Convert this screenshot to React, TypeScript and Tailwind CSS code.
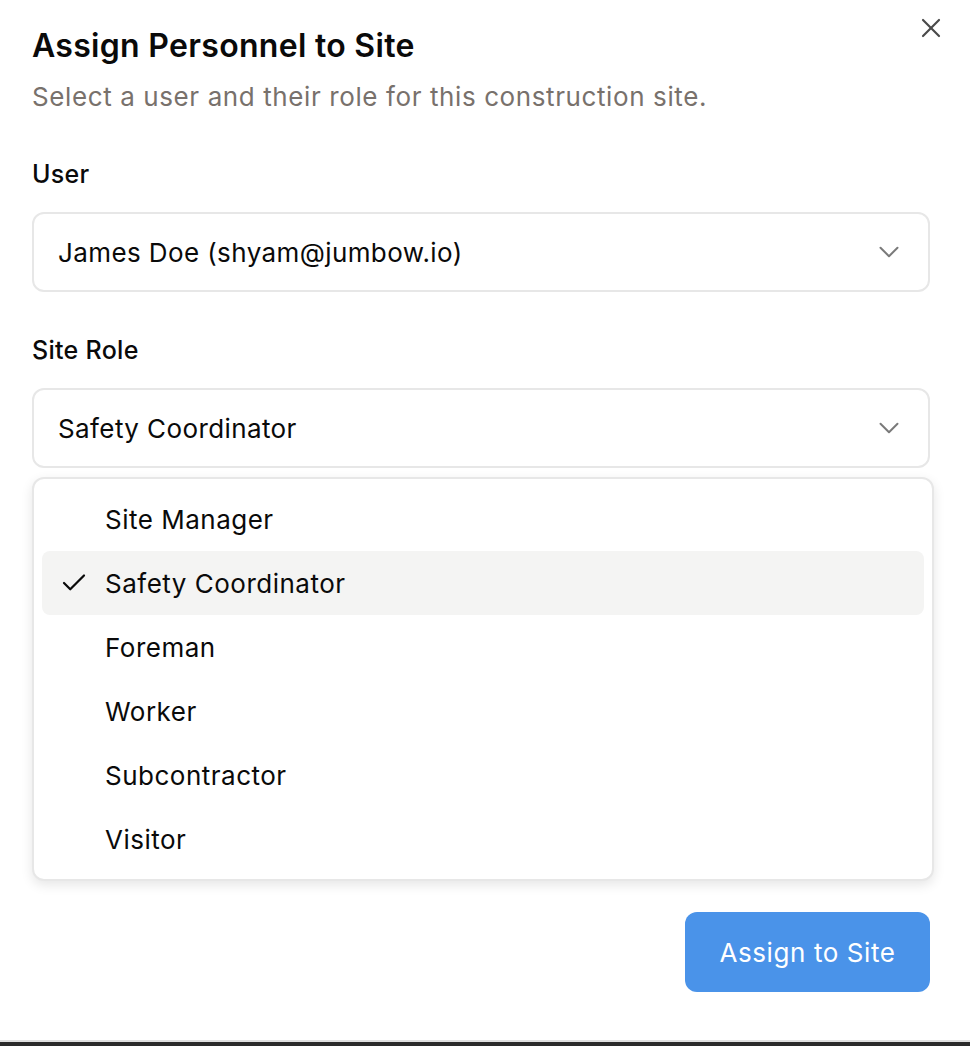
import React, { useState } from 'react';
import { Check, ChevronDown, X } from 'lucide-react';

const roles = ['Site Manager', 'Safety Coordinator', 'Foreman', 'Worker', 'Subcontractor', 'Visitor'];

const SelectBox: React.FC<{ value: string }> = ({ value }) => (
  <div className="flex h-[80px] items-center justify-between rounded-[12px] border-2 border-[#e7e7e7] bg-white pl-[24px] pr-[22px]">
    <span className="text-[26px] tracking-[0.4px] text-[#0a0a0a]">{value}</span>
    <ChevronDown size={34} strokeWidth={1.4} className="text-[#7a7a7a]" />
  </div>
);

const App: React.FC = () => {
  const [role, setRole] = useState('Safety Coordinator');

  return (
    <div
      className="relative flex h-[1046px] w-[970px] flex-col bg-white"
      style={{ fontFamily: 'Inter, "Noto Sans", sans-serif' }}
    >
      <div className="flex flex-1 flex-col pl-[32px] pr-[40px] pt-[24px]">
        <div className="flex items-start justify-between">
          <h2 className="text-[32px] leading-[44px] font-semibold tracking-[0.3px] text-[#0a0a0a]">
            Assign Personnel to Site
          </h2>
          <button className="mr-[-17px] mt-[-12px] text-[#4a4a4a]">
            <X size={32} strokeWidth={1.6} />
          </button>
        </div>
        <p className="mt-[12px] text-[26px] leading-[34px] tracking-[0.6px] text-[#78716c]">
          Select a user and their role for this construction site.
        </p>

        <label className="mt-[43px] text-[25px] leading-[34px] font-medium tracking-[0.3px] text-[#0a0a0a]">User</label>
        <div className="mt-[21px]">
          <SelectBox value="James Doe (shyam@jumbow.io)" />
        </div>

        <label className="mt-[41px] text-[25px] leading-[34px] font-medium tracking-[0.3px] text-[#0a0a0a]">Site Role</label>
        <div className="mt-[21px]">
          <SelectBox value={role} />
        </div>

        <div className="mt-auto mb-[48px] flex justify-end">
          <button className="h-[80px] w-[245px] rounded-[12px] bg-[#4a93e9] text-[26px] tracking-[0.6px] text-white">
            Assign to Site
          </button>
        </div>
      </div>

      <div className="h-[2px] bg-[#e0e0e0]" />
      <div className="h-[4px] bg-[#2b2b2b]" />

      <div className="absolute left-[32px] top-[477px] w-[902px] rounded-[12px] border-2 border-[#e7e7e7] bg-white px-[8px] py-[8px] shadow-[0_4px_12px_rgba(0,0,0,0.10)]">
        {roles.map((r) => (
          <div
            key={r}
            onClick={() => setRole(r)}
            className={`flex h-[64px] items-center rounded-[8px] ${r === role ? 'bg-[#f4f4f3]' : ''}`}
          >
            <span className="flex w-[63px] justify-center">
              {r === role && <Check size={30} strokeWidth={1.8} className="text-[#0a0a0a]" />}
            </span>
            <span className="text-[26px] tracking-[0.5px] text-[#0a0a0a]">{r}</span>
          </div>
        ))}
      </div>
    </div>
  );
};

export default App;
